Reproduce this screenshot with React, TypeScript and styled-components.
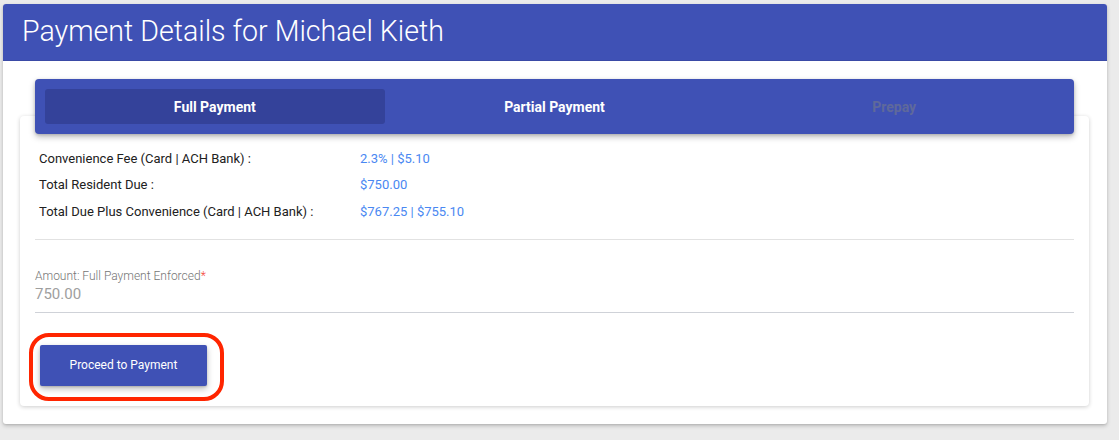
import React from "react";
import styled, { createGlobalStyle } from "styled-components";

const Global = createGlobalStyle`
  html, body { margin: 0; padding: 0; background: #ebebeb; }
  body { font-family: Roboto, "Liberation Sans", Arial, sans-serif; }
  * { box-sizing: border-box; }
`;

const Page = styled.div`
  padding: 4px 12px 16px 3px;
`;

const OuterCard = styled.div`
  width: 1104px;
  background: #ffffff;
  border-radius: 3px;
  box-shadow: 0 2px 4px rgba(0, 0, 0, 0.18), 0 1px 2px rgba(0, 0, 0, 0.1);
  padding-bottom: 18px;
  overflow: hidden;
`;

const Header = styled.div`
  height: 57px;
  background: #3f51b5;
  display: flex;
  align-items: center;
  padding-left: 19px;
  border-bottom: 1px solid #3a4aa6;
`;

const Title = styled.h1`
  margin: 0 0 2px 0;
  font-family: Roboto, sans-serif;
  font-weight: 300;
  font-size: 28.6px;
  color: #ffffff;
  letter-spacing: 0;
`;

const TabBar = styled.div`
  position: relative;
  z-index: 1;
  margin: 18px 33px 0 32px;
  height: 55px;
  background: #3f51b5;
  border-radius: 4px;
  box-shadow: 0 3px 6px rgba(0, 0, 0, 0.25), 0 1px 3px rgba(0, 0, 0, 0.15);
  display: grid;
  grid-template-columns: repeat(3, 1fr);
  padding: 10px;
`;

const Tab = styled.div<{ $active?: boolean; $disabled?: boolean }>`
  display: flex;
  align-items: center;
  justify-content: center;
  border-radius: 3px;
  font-family: Roboto, sans-serif;
  font-weight: 700;
  font-size: 14px;
  background: ${(p) => (p.$active ? "#34429a" : "transparent")};
  color: ${(p) => (p.$disabled ? "#5f699b" : "#ffffff")};
`;

const InnerCard = styled.div`
  margin: -18px 18px 0 17px;
  background: #ffffff;
  border-radius: 4px;
  box-shadow: 0 1px 4px rgba(0, 0, 0, 0.2);
  padding: 29px 15px 20px 15px;
`;

const InfoList = styled.div`
  padding-left: 4px;
`;

const InfoRow = styled.div`
  display: grid;
  grid-template-columns: 321px 1fr;
  height: 26.5px;
  align-items: center;
  font-family: Roboto, sans-serif;
  font-size: 13px;
`;

const Label = styled.span`
  color: #212121;
`;

const Value = styled.span`
  color: #4a88f2;
`;

const Divider = styled.div`
  margin-top: 14px;
  height: 1px;
  background: #e2e2e2;
`;

const Field = styled.div`
  margin-top: 29px;
  border-bottom: 1px solid #cfd2d8;
  padding-bottom: 8px;
`;

const FieldLabel = styled.div`
  font-family: Roboto, sans-serif;
  font-weight: 300;
  font-size: 12px;
  line-height: 14px;
  color: #757575;
`;

const Required = styled.span`
  color: #f44336;
`;

const FieldValue = styled.div`
  margin-top: 2px;
  font-family: Roboto, sans-serif;
  font-size: 15px;
  line-height: 19px;
  color: #9e9e9e;
`;

const ButtonWrap = styled.div`
  position: relative;
  margin: 32px 0 0 5px;
  width: 167px;
`;

const Highlight = styled.div`
  position: absolute;
  left: -11px;
  top: -12px;
  width: 195px;
  height: 68px;
  border: 4px solid #ff2500;
  border-radius: 20px;
  pointer-events: none;
`;

const Button = styled.button`
  display: block;
  width: 167px;
  height: 41px;
  border: none;
  border-radius: 2px;
  background: #3f51b5;
  color: #ffffff;
  font-family: Roboto, sans-serif;
  font-size: 12px;
  font-weight: 400;
  box-shadow: 0 3px 6px rgba(0, 0, 0, 0.25), 0 1px 2px rgba(0, 0, 0, 0.15);
  cursor: pointer;
`;

const rows = [
  ["Convenience Fee (Card | ACH Bank) :", "2.3% | $5.10"],
  ["Total Resident Due :", "$750.00"],
  ["Total Due Plus Convenience (Card | ACH Bank) :", "$767.25 | $755.10"],
];

export default function App() {
  return (
    <>
      <Global />
      <Page>
        <OuterCard>
          <Header>
            <Title>Payment Details for Michael Kieth</Title>
          </Header>
          <TabBar>
            <Tab $active>Full Payment</Tab>
            <Tab>Partial Payment</Tab>
            <Tab $disabled>Prepay</Tab>
          </TabBar>
          <InnerCard>
            <InfoList>
              {rows.map(([l, v]) => (
                <InfoRow key={l}>
                  <Label>{l}</Label>
                  <Value>{v}</Value>
                </InfoRow>
              ))}
            </InfoList>
            <Divider />
            <Field>
              <FieldLabel>
                Amount: Full Payment Enforced<Required>*</Required>
              </FieldLabel>
              <FieldValue>750.00</FieldValue>
            </Field>
            <ButtonWrap>
              <Highlight />
              <Button>Proceed to Payment</Button>
            </ButtonWrap>
          </InnerCard>
        </OuterCard>
      </Page>
    </>
  );
}
